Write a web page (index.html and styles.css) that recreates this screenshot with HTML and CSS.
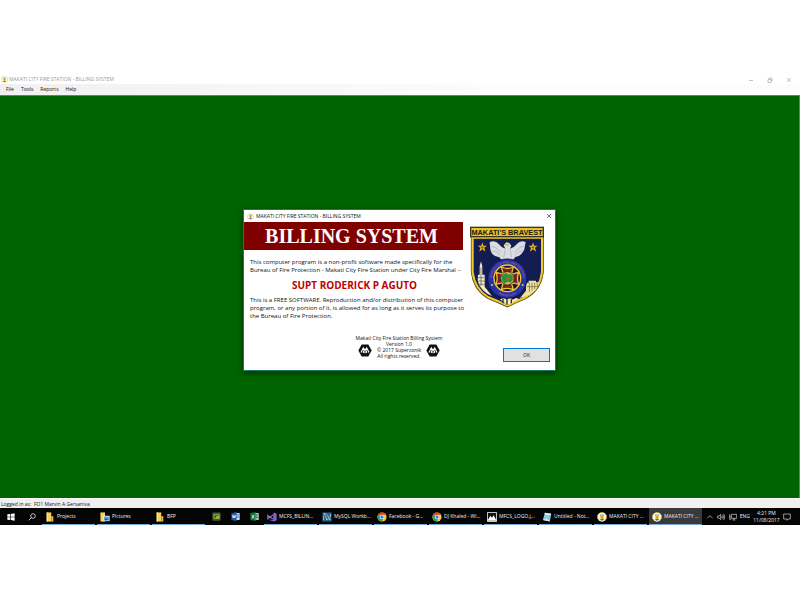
FILE: index.html
```
<!DOCTYPE html>
<html lang="en">
<head>
<meta charset="utf-8">
<meta name="viewport" content="width=device-width, initial-scale=1">
<title>Makati City Fire Station - Billing System</title>
<link rel="stylesheet" href="styles.css">
</head>
<body>
<svg class="defs" aria-hidden="true">
  <symbol id="seal" viewBox="0 0 20 20">
    <circle cx="10" cy="10" r="9.500" fill="#e9cf5c"/>
    <path d="M10 1l2 2 3-1 1 3 3 1-1 4 1 3-3 1-1 3-5 2-5-2-1-3-3-1 1-3-1-4 3-1 1-3 3 1z" fill="#fbf7dc"/>
    <path d="M6 5h8v4H6z" fill="#8fa6dc"/>
    <circle cx="10" cy="11" r="4" fill="#f2cf35"/>
    <path d="M6 14h8l-2 3H8z" fill="#4a63b8"/>
    <path d="M9 9h2v4H9z" fill="#c05a35"/>
  </symbol>
  <symbol id="folder" viewBox="0 0 20 24">
    <path d="M2 1h11v22H2z" fill="#f5cf62"/>
    <path d="M13 10h5v13h-5z" fill="#e8b63e"/>
    <path d="M2 1h3v22H2z" fill="#ffe69a"/>
  </symbol>
  <symbol id="chrome" viewBox="0 0 24 24">
    <circle cx="12" cy="12" r="11" fill="#f9cc29"/>
    <path d="M12 12L2.5 6.500A11 11 0 0 1 21.500 6.500H12z" fill="#e33b2e"/>
    <path d="M2.500 6.500A11 11 0 0 0 11 23l5-8-4-3z" fill="#26a352"/>
    <circle cx="12" cy="12" r="5.500" fill="#fff"/>
    <circle cx="12" cy="12" r="4" fill="#3d7ee8"/>
  </symbol>
  <symbol id="hexmark" viewBox="0 0 42 38">
    <path d="M11 1h20l10 18-10 18H11L1 19z" fill="#111"/>
    <path d="M9 25l7-14 5 8 5-8 7 14M16 26l1-7M21 27v-5M26 26l-1-7" fill="none" stroke="#fff" stroke-width="3.500"/>
  </symbol>
  <symbol id="star" viewBox="0 0 24 24">
    <path d="M12 0l3 9h9l-7 5 3 10-8-6-8 6 3-10-7-5h9z" fill="#e5b62f"/>
    <circle cx="12" cy="13" r="3" fill="#77602a"/>
  </symbol>
</svg>

<div class="screen">
  <header class="titlebar">
    <svg class="seal"><use href="#seal"/></svg>
    <h1 class="window-title">MAKATI CITY FIRE STATION - BILLING SYSTEM</h1>
    <div class="window-controls">
      <button class="control" aria-label="Minimize"><svg viewBox="0 0 6 6"><path d="M1 3.500h4"/></svg></button>
      <button class="control" aria-label="Restore"><svg viewBox="0 0 6 6"><path d="M1 2.500h3v3H1zM2 2V1h3v3H4"/></svg></button>
      <button class="control" aria-label="Close"><svg viewBox="0 0 6 6"><path d="M1 1l4 4M5 1L1 5"/></svg></button>
    </div>
  </header>
  <nav class="menubar">
    <button>File</button><button>Tools</button><button>Reports</button><button>Help</button>
  </nav>

  <main class="workspace">
    <section class="dialog" role="dialog" aria-labelledby="dialog-title">
      <header class="dialog-bar">
        <svg class="seal"><use href="#seal"/></svg>
        <h2 class="window-title" id="dialog-title">MAKATI CITY FIRE STATION - BILLING SYSTEM</h2>
        <button class="control dark" aria-label="Close"><svg viewBox="0 0 6 6"><path d="M1 1l4 4M5 1L1 5"/></svg></button>
      </header>
      <div class="dialog-body">
        <div class="about">
          <div class="banner">BILLING SYSTEM</div>
          <div class="copy">
            <p>This computer program is a non-profit software made specifically for the<br>Bureau of Fire Protection - Makati City Fire Station under City Fire Marshal --</p>
            <h3>SUPT RODERICK P AGUTO</h3>
            <p>This is a FREE SOFTWARE. Reproduction and/or distribution of this computer<br>program, or any portion of it, is allowed for as long as it serves its purpose to<br>the Bureau of Fire Protection.</p>
          </div>
          <div class="credits">
            <p>Makati City Fire Station Billing System</p>
            <div class="credits-row">
              <svg class="hexmark"><use href="#hexmark"/></svg>
              <p>Version 1.0<br>© 2017 Superzonik<br>All rights reserved.</p>
              <svg class="hexmark"><use href="#hexmark"/></svg>
            </div>
          </div>
        </div>
        <aside class="side">
          <svg class="shield" viewBox="26 66 222 246" role="img" aria-label="Makati's Bravest">
            <path d="M30 98H246V205Q240 258 196 283Q166 295 138 309Q108 295 78 283Q36 258 30 205z" fill="#151f55" stroke="#6e5a10" stroke-width="3"/>
            <path d="M34 101H242V204Q236 254 194 279Q166 291 138 304Q110 291 80 279Q40 254 34 204z" fill="#141d52" stroke="#f0cb2c" stroke-width="6"/>
            <path d="M50 212h5v-25l4-15 4 15v25h7v36l22 28-13-6q-24-16-30-40z" fill="#eeeacb"/>
            <path d="M50 221h18M50 231h20M52 241h18M59 190v56" stroke="#555" stroke-width="2"/>
            <path d="M194 236h8v-6h22v5h10q-6 30-40 42l-18 5 18-22z" fill="#eee3a4"/>
            <path d="M204 236v28M212 236v24M220 236v19M228 238v10M196 248h34" stroke="#706330" stroke-width="2"/>
            <path d="M116 286l12-5 8 5 9-7 9 8 10-5 9 3-35 18z" fill="#f4edb5"/>
            <path d="M125 284v14M137 284v18M150 286v12" stroke="#25264b" stroke-width="4"/>
            <path d="M85 114q17-7 28 7 8 11 19 13l-5-10 8-9 9 2 6 8-4 9q12-2 20-13 11-14 27-7l-4 22q-8 21-27 23l-10 13h-28l-10-12q-24-3-27-25z" fill="#d9dce0"/>
            <path d="M90 126q14 2 28 18M94 140q12 2 22 13M188 126q-14 2-28 18M184 140q-12 2-22 13M132 136l-5 25M146 136l5 25" stroke="#a4a9b2" stroke-width="2" fill="none"/>
            <path d="M129 123l7-4 8 3-4 3z" fill="#d5a82a"/>
            <use href="#star" x="49" y="115" width="28" height="28"/>
            <use href="#star" x="201" y="115" width="28" height="28"/>
            <circle cx="138" cy="224" r="59" fill="#2633a8" stroke="#111741" stroke-width="3"/>
            <path id="ring-top" d="M92 224a46 46 0 0 1 92 0" fill="none"/>
            <path id="ring-bottom" d="M85 224a53 53 0 0 0 106 0" fill="none"/>
            <text class="ring-text"><textPath href="#ring-top" startOffset="50%">BUREAU OF FIRE PROTECTION</textPath></text>
            <text class="ring-text"><textPath href="#ring-bottom" startOffset="50%">MAKATI CITY</textPath></text>
            <circle cx="92" cy="243" r="3" fill="#e8c83b"/><circle cx="184" cy="243" r="3" fill="#e8c83b"/>
            <circle cx="138" cy="223" r="40" fill="#17182b" stroke="#f0cb2c" stroke-width="4"/>
            <path d="M120 189q18 8 36 0l-6 22 22-6q-7 18 0 36l-22-6 6 22q-18-8-36 0l6-22-22 6q7-18 0-36l22 6z" fill="#7c2028" stroke="#efbf32" stroke-width="4"/>
            <circle cx="138" cy="223" r="20" fill="#e5b62c" stroke="#26282c" stroke-width="2"/>
            <path d="M122 214l12-7 6 4 13 1 2 12-6 12-10-3-10 6-8-10z" fill="#2b9340"/>
            <path d="M133 224l8-4 6 6-6 3z" fill="#c65b26"/>
            <rect x="28" y="70" width="218" height="28" fill="#e9bf2d" stroke="#3d3515" stroke-width="4"/>
            <text class="shield-text" x="137" y="92">MAKATI'S BRAVEST</text>
          </svg>
          <button class="ok">OK</button>
        </aside>
      </div>
    </section>
  </main>

  <div class="status">Logged in as:&nbsp; FO1 Marvin A Gersaniva</div>

  <footer class="taskbar">
    <button class="tool wide" aria-label="Start"><svg viewBox="0 0 24 24"><path d="M1 4l9-1v8H1zM12 3l11-2v10H12zM1 13h9v8l-9-1zM12 13h11v10l-11-2z" fill="#fff"/></svg></button>
    <button class="tool wide" aria-label="Search"><svg viewBox="0 0 24 24"><path d="M2 22l9-9" stroke="#ddd" stroke-width="2.500"/><circle cx="15" cy="9" r="7" fill="none" stroke="#ddd" stroke-width="2.500"/></svg></button>
    <button class="task folder"><svg><use href="#folder"/></svg><span>Projects</span></button>
    <button class="task folder"><svg viewBox="0 0 24 24"><path d="M1 1h11v22H1z" fill="#f5cf62"/><path d="M8 9h15v13H8z" fill="#e5f3ff"/><path d="M10 11h11v9H10z" fill="#4b9bdc"/><path d="M10 20l4-5 3 3 2-2 2 4z" fill="#245f88"/></svg><span>Pictures</span></button>
    <button class="task folder"><svg><use href="#folder"/></svg><span>BFP</span></button>
    <div class="pins">
      <button class="tool" aria-label="Screen recorder"><svg viewBox="0 0 24 24"><rect x="1" y="1" width="22" height="22" rx="2" fill="#4b5142"/><path d="M5 7h14v10H5z" fill="none" stroke="#8bb52e" stroke-width="2.500"/><circle cx="15" cy="14" r="4" fill="#96c331"/></svg></button>
      <button class="tool" aria-label="Word"><svg viewBox="0 0 24 24"><path d="M12 3h11v18H12z" fill="#edf4ff"/><path d="M14 7h8M14 11h8M14 15h8" stroke="#3268b3" stroke-width="2"/><path d="M1 3l14-3v24L1 21z" fill="#2459a6"/><path d="M4 8l2 8 2-7 2 7 2-8" fill="none" stroke="#fff" stroke-width="2"/></svg></button>
      <button class="tool" aria-label="Excel"><svg viewBox="0 0 24 24"><path d="M12 3h11v18H12z" fill="#e9f7ee"/><path d="M14 7h8M14 11h8M14 15h8M18 4v16" stroke="#237b46" stroke-width="2"/><path d="M1 3l14-3v24L1 21z" fill="#167640"/><path d="M5 8l6 9M11 8l-6 9" stroke="#fff" stroke-width="2"/></svg></button>
    </div>
    <button class="task"><svg viewBox="0 0 24 24"><path d="M17 1l6 3v16l-6 3L2 18l13 1V5z" fill="#8c61ca"/><path d="M2 8l4 4-4 4zM15 7l-8 5 8 5" fill="none" stroke="#a37bdb" stroke-width="2.500"/></svg><span>MCFS_BILLIN...</span></button>
    <button class="task"><svg viewBox="0 0 24 24"><path d="M1 1h22v22H1z" fill="#235b7d"/><path d="M4 4q9-1 11 8l5 7-5-3-4 3q0-9-7-15zM4 20V9M20 4v9" fill="none" stroke="#b5d8e8" stroke-width="2"/></svg><span>MySQL Workb...</span></button>
    <button class="task"><svg><use href="#chrome"/></svg><span>Facebook - G...</span></button>
    <button class="task"><svg><use href="#chrome"/></svg><span>DJ Khaled - Wi...</span></button>
    <button class="task"><svg viewBox="0 0 24 24"><path d="M1 1h22v22H1z" fill="#111" stroke="#fff" stroke-width="2"/><path d="M1 21l7-12 4 5 4-6 7 13z" fill="#fff"/></svg><span>MFCS_LOGO.j...</span></button>
    <button class="task"><svg viewBox="0 0 24 24"><path d="M7 2l15 2-3 19-17-4z" fill="#8fcbdc"/><path d="M7 2l15 2-1 4L6 6z" fill="#e2f3f7"/><path d="M2 19l9-3 8 7z" fill="#dcebed"/></svg><span>Untitled - Not...</span></button>
    <button class="task"><svg><use href="#seal"/></svg><span>MAKATI CITY ...</span></button>
    <button class="task active"><svg><use href="#seal"/></svg><span>MAKATI CITY ...</span></button>
    <div class="tray">
      <svg viewBox="0 0 24 24"><path d="M4 16l8-8 8 8"/></svg>
      <svg viewBox="0 0 24 24"><path d="M2 9h4l5-5v16l-5-5H2zM14 9q3 3 0 6M17 6q5 6 0 12M20 3q7 9 0 18"/></svg>
      <svg viewBox="0 0 24 24"><path d="M7 4h16v12H7zM11 21h8M15 16v5M2 4v8h5M2 12v7h5"/></svg>
      <span class="language">ENG</span>
      <time class="clock">4:21 PM<br>11/08/2017</time>
      <svg viewBox="0 0 24 24"><path d="M2 3h20v15h-7l-3 4v-4H2z"/></svg>
    </div>
  </footer>
</div>
</body>
</html>
```
FILE: styles.css
```
* { box-sizing: border-box; }

body {
  margin: 0;
  min-height: 100vh;
  display: grid;
  align-items: center;
  background: #fff;
  color: #111;
  font: 5px/7px "Open Sans", "Noto Sans", sans-serif;
}

h1, h2, h3, p { margin: 0; font: inherit; }

button {
  margin: 0;
  padding: 0;
  border: 0;
  background: none;
  color: inherit;
  font: inherit;
}

svg { display: block; flex: none; }

.defs { position: absolute; width: 0; height: 0; }

.screen {
  width: 100%;
  aspect-ratio: 16 / 9;
  display: flex;
  flex-direction: column;
}

.titlebar {
  display: flex;
  align-items: center;
  height: 9px;
  padding: 0 8px 0 1px;
  gap: 1px;
  color: #999;
}

.seal { width: 7px; height: 7px; }

.window-title { flex: 1; white-space: nowrap; }

.window-controls { display: flex; gap: 13px; }

.control { width: 6px; height: 6px; color: #999; }
.control svg { width: 6px; height: 6px; fill: none; stroke: currentColor; stroke-width: 0.6; }
.control.dark { color: #222; }

.menubar {
  display: flex;
  gap: 7px;
  height: 11px;
  padding: 0 6px;
  background: linear-gradient(90deg, #f0f0f0, #fcfcfc 60%);
  color: #111;
}

.workspace {
  flex: 1;
  display: grid;
  place-items: center;
  padding-bottom: 14px;
  background: #006400;
  border: solid #777;
  border-width: 1px 1px 0 0;
}

.dialog {
  width: 313px;
  background: #fff;
  border: 1px solid #17786c;
  box-shadow: 0 2px 6px #0008;
}

.dialog-bar {
  display: flex;
  align-items: center;
  gap: 2px;
  height: 12px;
  padding: 0 3px;
}

.dialog-body { display: flex; height: 148px; }

.about {
  width: 219px;
  display: flex;
  flex-direction: column;
}

.banner {
  background: #800000;
  color: #fff;
  font: bold 20px/28px "Liberation Serif", serif;
  text-align: center;
  padding-right: 4px;
}

.copy {
  padding: 8px 0 0 6px;
  font: 6px/8px "Open Sans", "Noto Sans", sans-serif;
  white-space: nowrap;
}

.copy h3 {
  margin: 5px 0;
  color: #c00000;
  font-weight: bold;
  font-size: 10px;
  line-height: 12px;
  text-align: center;
  padding-right: 4px;
}

.credits {
  align-self: flex-end;
  width: 100px;
  margin: 15px 14px 0 0;
  font-size: 5px;
  line-height: 6px;
  text-align: center;
  white-space: nowrap;
}

.credits-row { display: flex; align-items: center; justify-content: center; gap: 5px; }
.credits-row p { width: 44px; }

.hexmark { width: 14px; height: 13px; }

.side {
  flex: 1;
  display: flex;
  flex-direction: column;
  justify-content: space-between;
  align-items: flex-end;
  padding: 4px 5px 8px 0;
}

.shield { width: 74px; height: 82px; align-self: center; }
.shield-text { font: bold 22px "Liberation Sans", sans-serif; text-anchor: middle; fill: #1b1b12; }
.ring-text { font: bold 9px "Liberation Sans", sans-serif; text-anchor: middle; fill: #a55588; }

.ok {
  width: 47px;
  height: 14px;
  border: 1px solid #0078d7;
  background: #e1e1e1;
  text-align: center;
}

.status {
  height: 10px;
  padding: 2px 1px 0;
  line-height: 7px;
  background: #f0f0f0;
  border-top: 1px solid #fff;
}

.taskbar {
  display: flex;
  align-items: stretch;
  height: 17px;
  background: #050505;
  color: #eee;
}

.tool { display: grid; place-items: center; width: 19px; }
.tool svg { width: 9px; height: 9px; }
.tool.wide { width: 21px; }
.tool.wide svg { width: 8px; height: 8px; }

.pins { display: flex; }

.task {
  flex: 0 1 53px;
  min-width: 0;
  display: flex;
  align-items: center;
  gap: 2px;
  padding: 1px 0 0 3px;
  margin-right: 2px;
  border-bottom: 1px solid #76a9d8;
  white-space: nowrap;
}

.task svg { width: 10px; height: 10px; }
.task.folder { gap: 2px; }
.task.active { background: #3a3a3c; margin-right: 0; }

.tray {
  flex: 1;
  display: flex;
  align-items: center;
  justify-content: space-between;
  padding: 0 9px 0 4px;
}

.tray svg { width: 8px; height: 8px; fill: none; stroke: #ddd; stroke-width: 2; }

.clock { line-height: 7px; text-align: center; }
```
